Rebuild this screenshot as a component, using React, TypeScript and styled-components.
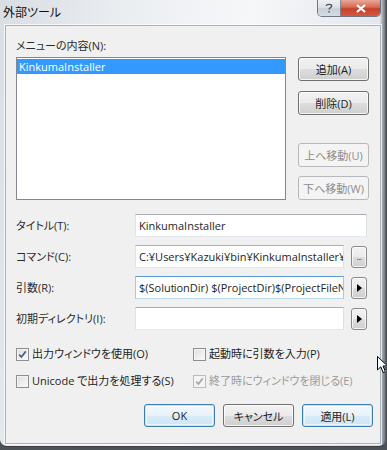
import React from 'react';
import styled, { createGlobalStyle, css } from 'styled-components';

const GlobalStyle = createGlobalStyle`
    html, body {
        margin: 0;
        padding: 0;
        background: #4d5259;
    }
    body {
        min-height: 450px;
        font-family: "Open Sans", "Noto Sans CJK JP", sans-serif;
        font-size: 11px;
        font-feature-settings: "palt";
        color: #1e1e1e;
    }
`;

const Window = styled.div`
    position: relative;
    box-sizing: border-box;
    width: 386px;
    height: 447px;
    display: flex;
    flex-direction: column;
    padding: 0 4px 3px 5px;
    border-radius: 0 0 7px 7px;
    border-right: 1px solid #5a6068;
    border-bottom: 1px solid #3c4046;
    background:
        linear-gradient(to right, rgba(0,0,0,0) 0, rgba(0,0,0,0) 380px, rgba(90,96,104,0.55) 383px, rgba(60,64,70,0.7) 386px),
        linear-gradient(100deg, #d9dee4 0%, #eceff2 30%, #f6f7f9 55%, #e9ecef 75%, #d4d9df 100%);
    overflow: hidden;
`;

const TitleBar = styled.div`
    flex: none;
    height: 25px;
    display: flex;
    align-items: flex-start;
    justify-content: space-between;
`;

const Title = styled.div`
    margin: 4px 0 0 -2px;
    font-family: "Noto Sans CJK JP", sans-serif;
    font-size: 12px;
    line-height: 16px;
    color: #101010;
`;

const CaptionGroup = styled.div`
    display: flex;
    border: 1px solid rgba(70, 80, 95, 0.75);
    border-top: none;
    border-radius: 0 0 5px 5px;
    overflow: hidden;
`;

const CaptionButton = styled.div<{ $close?: boolean }>`
    height: 16px;
    width: ${p => (p.$close ? 39 : 22)}px;
    display: flex;
    align-items: center;
    justify-content: center;
    ${p => p.$close
        ? css`
            background: linear-gradient(#e9a896 0%, #d66a53 45%, #c5412b 55%, #d5583f 100%);
        `
        : css`
            border-right: 1px solid rgba(70, 80, 95, 0.6);
            background: linear-gradient(#eef1f4 0%, #dde2e8 45%, #c8cfd7 55%, #d6dce2 100%);
        `}
`;

const Client = styled.div`
    flex: 1;
    display: flex;
    flex-direction: column;
    padding: 12px 11px 0 10px;
    background: #f0f0f0;
    border: 1px solid #aab2bc;
    box-shadow: 0 0 0 1px rgba(255, 255, 255, 0.7);
`;

const Label = styled.div<{ $disabled?: boolean }>`
    line-height: 16px;
    color: ${p => (p.$disabled ? '#9a9a9a' : '#2a2a2a')};
    white-space: nowrap;
`;

const MenuSection = styled.div`
    display: grid;
    grid-template-columns: 1fr 71px;
    column-gap: 12px;
    margin-top: 3px;
`;

const ListBox = styled.div`
    height: 143px;
    box-sizing: border-box;
    border: 1px solid #828790;
    background: #fff;
    padding: 1px 0 0 0;
`;

const ListItem = styled.div<{ $selected?: boolean }>`
    height: 15px;
    line-height: 15px;
    padding-left: 2px;
    color: ${p => (p.$selected ? '#fff' : '#1e1e1e')};
    background: ${p => (p.$selected ? '#3399ff' : 'transparent')};
`;

const SideButtons = styled.div`
    display: flex;
    flex-direction: column;
`;

const Button = styled.div<{ $primary?: boolean; $disabled?: boolean; $mt?: number }>`
    box-sizing: border-box;
    height: 24px;
    display: flex;
    align-items: center;
    justify-content: center;
    margin-top: ${p => p.$mt ?? 0}px;
    border: 1px solid #707070;
    border-radius: 3px;
    box-shadow: inset 0 0 0 1px rgba(255, 255, 255, 0.75);
    background: linear-gradient(#f2f2f2 0%, #ebebeb 50%, #dddddd 51%, #cfcfcf 100%);
    color: #1e1e1e;
    white-space: nowrap;
    ${p => p.$primary && css`
        border-color: #3c7fb1;
        box-shadow: inset 0 0 0 1px #c6e4f7, inset 0 0 0 2px rgba(255, 255, 255, 0.6);
        background: linear-gradient(#f4f9fd 0%, #e6f2fa 50%, #d7ebf8 51%, #cfe6f5 100%);
    `}
    ${p => p.$disabled && css`
        border-color: #b5b9bc;
        box-shadow: none;
        background: #f4f4f4;
        color: #8d8d8d;
    `}
`;

const FormGrid = styled.div`
    display: grid;
    grid-template-columns: 112px minmax(0, 1fr) 16px;
    column-gap: 7px;
    row-gap: 8px;
    align-items: center;
    margin-top: 14px;
    padding-right: 2px;
`;

const TextBox = styled.div<{ $span?: boolean; $focused?: boolean }>`
    box-sizing: border-box;
    height: 23px;
    display: flex;
    align-items: center;
    padding-left: 3px;
    background: #fff;
    border: 1px solid;
    border-color: #abadb3 #dbdfe6 #e3e9ef #e2e3ea;
    white-space: nowrap;
    overflow: hidden;
    color: #1e1e1e;
    ${p => p.$span && css`grid-column: 2 / 4;`}
    ${p => p.$focused && css`
        border-color: #5a9ccf #a4c9e3 #b7d9ed #a4c9e3;
    `}
`;

const Caret = styled.span`
    display: inline-block;
    width: 1px;
    height: 14px;
    background: #000;
    margin-right: -1px;
`;

const SmallButton = styled(Button)`
    height: 22px;
    width: 16px;
    border-color: #8a8a8a;
    font-size: 8px;
    letter-spacing: -0.5px;
`;

const CheckGrid = styled.div`
    display: grid;
    grid-template-columns: 177px 1fr;
    row-gap: 11px;
    margin-top: 16px;
`;

const CheckRow = styled.label<{ $disabled?: boolean }>`
    display: flex;
    align-items: center;
    gap: 3px;
    line-height: 16px;
    white-space: nowrap;
    color: ${p => (p.$disabled ? '#9a9a9a' : '#1e1e1e')};
`;

const CheckBox = styled.span<{ $disabled?: boolean }>`
    box-sizing: border-box;
    flex: none;
    width: 13px;
    height: 13px;
    display: flex;
    align-items: center;
    justify-content: center;
    border: 1px solid ${p => (p.$disabled ? '#bcbcbc' : '#8e8f8f')};
    background: ${p => (p.$disabled
        ? '#f4f4f4'
        : 'linear-gradient(135deg, #dcdcdc 0%, #f0f0f0 60%, #fbfbfb 100%)')};
    box-shadow: inset 0 0 0 1px #f4f4f4;
`;

const Footer = styled.div`
    display: flex;
    justify-content: flex-end;
    gap: 8px;
    margin: 15px -4px 16px 0;
`;

const FooterButton = styled(Button)`
    width: 71px;
    height: 23px;
`;

const Cursor = styled.svg`
    position: absolute;
    left: 377px;
    top: 356px;
`;

const CheckMark = ({ disabled }: { disabled?: boolean }) => (
    <svg width="9" height="9" viewBox="0 0 9 9">
        <path d="M1.2 4.6 L3.4 7 L7.8 1.4" fill="none"
            stroke={disabled ? '#a8a8a8' : '#4a5f87'} strokeWidth="1.7" />
    </svg>
);

const Arrow = () => (
    <svg width="5" height="8" viewBox="0 0 5 8">
        <polygon points="0,0 5,4 0,8" fill="#000" />
    </svg>
);

const Check = ({ checked, disabled, children }: { checked?: boolean; disabled?: boolean; children: React.ReactNode }) => (
    <CheckRow $disabled={disabled}>
        <CheckBox $disabled={disabled}>{checked && <CheckMark disabled={disabled} />}</CheckBox>
        {children}
    </CheckRow>
);

const App = () => {
    return <>
        <GlobalStyle />
        <Window>
            <TitleBar>
                <Title>外部ツール</Title>
                <CaptionGroup>
                    <CaptionButton>
                        <svg width="8" height="10" viewBox="0 0 8 10">
                            <path d="M1.3 3 C1.3 0.8 6.7 0.8 6.7 3 C6.7 4.6 4 4.6 4 6.6 M4 8 L4 9.6"
                                fill="none" stroke="#4a5563" strokeWidth="1.4" />
                        </svg>
                    </CaptionButton>
                    <CaptionButton $close>
                        <svg width="10" height="9" viewBox="0 0 10 9">
                            <path d="M1 1 L9 8 M9 1 L1 8" stroke="#fff" strokeWidth="2.2" />
                        </svg>
                    </CaptionButton>
                </CaptionGroup>
            </TitleBar>
            <Client>
                <Label>メニューの内容(N):</Label>
                <MenuSection>
                    <ListBox>
                        <ListItem $selected>KinkumaInstaller</ListItem>
                    </ListBox>
                    <SideButtons>
                        <Button>追加(A)</Button>
                        <Button $mt={10}>削除(D)</Button>
                        <Button $mt={28} $disabled>上へ移動(U)</Button>
                        <Button $mt={9} $disabled>下へ移動(W)</Button>
                    </SideButtons>
                </MenuSection>
                <FormGrid>
                    <Label>タイトル(T):</Label>
                    <TextBox $span>KinkumaInstaller</TextBox>

                    <Label>コマンド(C):</Label>
                    <TextBox>C:¥Users¥Kazuki¥bin¥KinkumaInstaller¥KinkumaInstaller.exe</TextBox>
                    <SmallButton>...</SmallButton>

                    <Label>引数(R):</Label>
                    <TextBox $focused>$(Solut<Caret />ionDir) $(ProjectDir)$(ProjectFileName)</TextBox>
                    <SmallButton><Arrow /></SmallButton>

                    <Label>初期ディレクトリ(I):</Label>
                    <TextBox></TextBox>
                    <SmallButton><Arrow /></SmallButton>
                </FormGrid>
                <CheckGrid>
                    <Check checked>出力ウィンドウを使用(O)</Check>
                    <Check>起動時に引数を入力(P)</Check>
                    <Check>Unicode で出力を処理する(S)</Check>
                    <Check checked disabled>終了時にウィンドウを閉じる(E)</Check>
                </CheckGrid>
                <Footer>
                    <FooterButton $primary>OK</FooterButton>
                    <FooterButton>キャンセル</FooterButton>
                    <FooterButton $primary>適用(L)</FooterButton>
                </Footer>
            </Client>
            <Cursor width="12" height="18" viewBox="0 0 12 18">
                <path d="M0.5 0.5 L0.5 14 L3.8 10.8 L6.2 16.5 L8.4 15.6 L6 10 L10.5 10 Z"
                    fill="#fff" stroke="#000" strokeWidth="1" />
            </Cursor>
        </Window>
    </>;
};

export default App;
